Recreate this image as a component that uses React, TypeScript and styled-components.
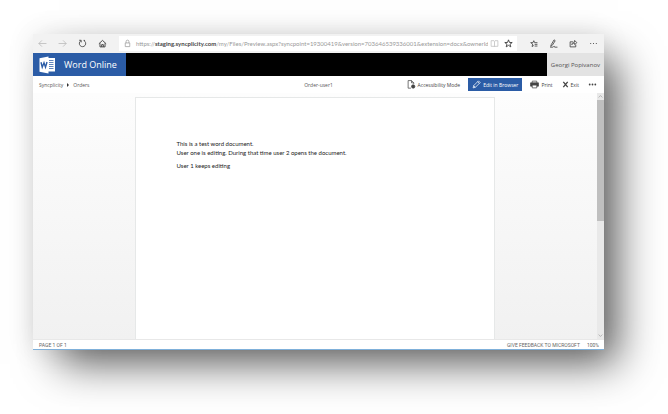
import React from "react";
import styled, { createGlobalStyle } from "styled-components";

const Global = createGlobalStyle`
  * { box-sizing: border-box; }
  body { margin: 0; background: #fff; }
  button, input { font: inherit; color: inherit; border: 0; padding: 0; margin: 0; background: none; }
  a { color: inherit; text-decoration: none; }
`;

const Page = styled.div`
  display: flex;
  min-height: 100vh;
  padding: 34px 64px 64px 33px;
  font-family: "Open Sans", "Noto Sans", sans-serif;
  font-size: 6px;
  line-height: 8px;
  color: #555;
  overflow: hidden;
`;

const Window = styled.div`
  flex: 1;
  min-width: 0;
  display: flex;
  flex-direction: column;
  background: #fff;
  border-bottom: 1px solid #7fb0da;
  box-shadow: 20px 20px 40px -6px rgba(0, 0, 0, 0.62), 0 0 26px rgba(0, 0, 0, 0.1);
`;

const BrowserBar = styled.header`
  display: flex;
  align-items: center;
  height: 19px;
  padding: 0 6px 0 5px;
  background: #f2f2f2;
`;

const IconRow = styled.nav`
  display: flex;
  gap: 11px;
`;

const IconButton = styled.button<{ $tone?: string }>`
  display: flex;
  flex: none;
  color: ${(p) => p.$tone ?? "#444"};
`;

const Address = styled.div`
  flex: 1;
  min-width: 0;
  display: flex;
  align-items: center;
  height: 15px;
  margin: 0 12px;
  padding: 0 4px;
  background: #fff;
  color: #999;
`;

const AddressText = styled.label`
  flex: 1;
  min-width: 0;
  display: flex;
  align-items: center;
  margin: 0 2px 0 4px;
  font-family: Lato, sans-serif;
  white-space: nowrap;
`;

const Host = styled.strong`
  color: #444;
  font-weight: 700;
`;

const PathInput = styled.input`
  flex: 1;
  min-width: 0;
  height: 10px;
  outline: none;
`;

const AddressActions = styled.div`
  display: flex;
  gap: 5px;
`;

const Banner = styled.div`
  display: flex;
  height: 23px;
  background: #000;
`;

const Brand = styled.a`
  display: flex;
  align-items: center;
  gap: 8px;
  padding: 0 9px 0 6px;
  background: #2b5ca6;
  color: #fff;
  font-size: 9px;
  line-height: 14px;
  white-space: nowrap;
`;

const Account = styled.button`
  margin-left: auto;
  padding: 0 4px;
  background: #e3e3e3;
  font-size: 6px;
  white-space: nowrap;
`;

const Toolbar = styled.div`
  display: grid;
  grid-template-columns: 1fr auto 1fr;
  align-items: center;
  height: 17px;
  padding: 0 6px;
  font-size: 5px;
  white-space: nowrap;
`;

const Crumbs = styled.nav`
  display: flex;
  align-items: center;
  gap: 4px;
`;

const Commands = styled.div`
  display: flex;
  align-items: center;
  justify-content: flex-end;
  gap: 7px;
`;

const Command = styled.button<{ $primary?: boolean }>`
  display: flex;
  align-items: center;
  gap: 2px;
  height: 13px;
  padding: ${(p) => (p.$primary ? "0 4px" : "0 1px")};
  background: ${(p) => (p.$primary ? "#2b5ca6" : "transparent")};
  color: ${(p) => (p.$primary ? "#fff" : "#444")};
`;

const Viewer = styled.main`
  flex: 1;
  display: flex;
  min-height: 0;
`;

const Canvas = styled.div`
  flex: 1;
  display: flex;
  justify-content: center;
  padding-top: 4px;
  background: linear-gradient(#fdfdfd, #f1f1f1);
`;

const Paper = styled.article`
  width: 64%;
  padding: 41px;
  background: #fff;
  border: 1px solid #e6e8e8;
  border-bottom: 0;
  font-family: Lato, sans-serif;
  font-size: 6px;
  line-height: 9px;
  color: #222;
`;

const Paragraph = styled.p`
  margin: 0 0 4px;
`;

const ScrollTrack = styled.div`
  display: flex;
  flex-direction: column;
  width: 7px;
  background: #e9e9e9;
  color: #999;
`;

const ScrollButton = styled.button`
  display: flex;
  justify-content: center;
  align-items: center;
  height: 7px;
`;

const ScrollSpace = styled.div`
  flex: 1;
`;

const ScrollThumb = styled.div`
  height: 52%;
  background: #bfbfbf;
`;

const StatusBar = styled.footer`
  display: flex;
  align-items: center;
  gap: 7px;
  height: 10px;
  padding: 0 5px 0 6px;
  border-top: 1px solid #e8e8e8;
  font-family: Roboto, sans-serif;
  font-size: 5px;
  color: #666;
`;

const Feedback = styled.a`
  margin-left: auto;
`;

type IconProps = {
  size?: number;
  weight?: number;
  children: React.ReactNode;
};

const Icon = ({ size = 9, weight = 1.3, children }: IconProps) => (
  <svg
    width={size}
    height={size}
    viewBox="0 0 16 16"
    fill="none"
    stroke="currentColor"
    strokeWidth={weight}
    aria-hidden="true"
  >
    {children}
  </svg>
);

const Dots = ({ r = 1 }: { r?: number }) => (
  <Icon>
    <g fill="currentColor" stroke="none">
      <circle cx="3" cy="8" r={r} />
      <circle cx="8" cy="8" r={r} />
      <circle cx="13" cy="8" r={r} />
    </g>
  </Icon>
);

const WordLogo = () => (
  <svg width="17" height="18" viewBox="0 0 34 36" aria-hidden="true">
    <path d="M18 4h14v27H18z" fill="#fff" />
    <path d="M20 9h9M20 13h9M20 17h9M20 21h9M20 25h9" stroke="#2b5ca6" strokeWidth="1.5" />
    <path d="M1 4.500 19 1v34L1 31.500z" fill="#fff" />
    <path
      d="m4 12.500 2.500 10L10 13.500l3 9 3-10.500"
      fill="none"
      stroke="#2b5ca6"
      strokeWidth="2.800"
    />
  </svg>
);

const star = "m8 1.500 1.700 4.600 4.900.2-3.900 3 1.400 4.700L8 11.300 3.900 14l1.400-4.700-3.900-3 4.900-.2z";

export default function App() {
  return (
    <>
      <Global />
      <Page>
        <Window>
          <BrowserBar>
            <IconRow aria-label="Navigation">
              <IconButton aria-label="Back" $tone="#b5b5b5">
                <Icon><path d="M15 8H1.500M7 2.500 1.500 8 7 13.500" /></Icon>
              </IconButton>
              <IconButton aria-label="Forward" $tone="#b5b5b5">
                <Icon><path d="M1 8h13.500M9 2.500 14.500 8 9 13.500" /></Icon>
              </IconButton>
              <IconButton aria-label="Refresh">
                <Icon weight={1.5}><path d="M10.500 2.800A5.700 5.700 0 1 1 5.200 3M2 2.300h3.700v3.700M10 2.500h2.500" /></Icon>
              </IconButton>
              <IconButton aria-label="Home">
                <Icon weight={1.7}><path d="M1.500 8.500 8 2.500l6.500 6M3.500 7.500v6.500h9V7.500M6.500 14v-4h3v4" /></Icon>
              </IconButton>
            </IconRow>
            <Address>
              <Icon><path d="M4 7h8v6.500H4zM5.500 7V4.500a2.500 2.500 0 0 1 5 0V7" /></Icon>
              <AddressText>
                https://<Host>staging.syncplicity.com</Host>
                <PathInput
                  aria-label="Address"
                  defaultValue="/my/Files/Preview.aspx?syncpoint=19300419&version=703646539336001&extension=docx&ownerId=8b569"
                />
              </AddressText>
              <AddressActions>
                <IconButton aria-label="Reading view" $tone="#bbb">
                  <Icon><path d="M2 3h5l1 1 1-1h5v10H9l-1 1-1-1H2zM8 4v10" /></Icon>
                </IconButton>
                <IconButton aria-label="Add to favorites">
                  <Icon weight={1.7}><path d={star} /></Icon>
                </IconButton>
              </AddressActions>
            </Address>
            <IconRow aria-label="Browser tools">
              <IconButton aria-label="Favorites hub">
                <Icon weight={1.5}>
                  <path d="m8.500 11.500-3 2 1-4.500L3 6.500h4L8.500 3 10 6.500h5M10 9.500h5M10 12.500h5" />
                </Icon>
              </IconButton>
              <IconButton aria-label="Make a web note">
                <Icon weight={1.5}><path d="m4 10 5-8.500 2 1.500-5 8-3 2zM2 14.500h5c2-2 3-2 3 0h5" /></Icon>
              </IconButton>
              <IconButton aria-label="Share">
                <Icon weight={1.5}><path d="M7 5H2v9h10v-4M5 10c.5-3 2.500-4.500 5-4.500V2.500l4 4-4 3.500V7.500C8 7.500 6.500 8 5 10z" /></Icon>
              </IconButton>
              <IconButton aria-label="More">
                <Dots />
              </IconButton>
            </IconRow>
          </BrowserBar>

          <Banner>
            <Brand href="#">
              <WordLogo />
              Word Online
            </Brand>
            <Account>Georgi Popivanov</Account>
          </Banner>

          <Toolbar>
            <Crumbs aria-label="Breadcrumb">
              <a href="#">Syncplicity</a>
              <svg width="2" height="4" viewBox="0 0 2 4" aria-hidden="true">
                <path d="M0 0l2 2-2 2z" fill="#333" />
              </svg>
              <a href="#">Orders</a>
            </Crumbs>
            <span>Order-user1</span>
            <Commands>
              <Command>
                <Icon>
                  <path d="M7 14.500H2V1h6l4 4v2M8 1v4h4" />
                  <circle cx="11" cy="11.500" r="3" fill="currentColor" />
                </Icon>
                Accessibility Mode
              </Command>
              <Command $primary>
                <Icon><path d="m2 14 1-4L11.500 1.500l3 3L6 13zM3 10l3 3M10 3l3 3" /></Icon>
                Edit in Browser
              </Command>
              <Command>
                <Icon>
                  <path d="M4 5V2h8v3" />
                  <path d="M1 5h14v6H1z" fill="currentColor" />
                  <path d="M4 9h8v5H4z" fill="#fff" />
                </Icon>
                Print
              </Command>
              <Command>
                <Icon size={7} weight={3}><path d="m3 2 10 12M13 2 3 14" /></Icon>
                Exit
              </Command>
              <Command aria-label="More commands">
                <Dots r={1.6} />
              </Command>
            </Commands>
          </Toolbar>

          <Viewer>
            <Canvas>
              <Paper>
                <Paragraph>
                  This is a test word document.
                  <br />
                  User one is editing. During that time user 2 opens the document.
                </Paragraph>
                <Paragraph>User 1 keeps editing</Paragraph>
              </Paper>
            </Canvas>
            <ScrollTrack>
              <ScrollButton aria-label="Scroll up">
                <Icon size={5} weight={2}><path d="m2 11 6-6 6 6" /></Icon>
              </ScrollButton>
              <ScrollSpace>
                <ScrollThumb />
              </ScrollSpace>
              <ScrollButton aria-label="Scroll down">
                <Icon size={5} weight={2}><path d="m2 5 6 6 6-6" /></Icon>
              </ScrollButton>
            </ScrollTrack>
          </Viewer>

          <StatusBar>
            <span>PAGE 1 OF 1</span>
            <Feedback href="#">GIVE FEEDBACK TO MICROSOFT</Feedback>
            <span>100%</span>
          </StatusBar>
        </Window>
      </Page>
    </>
  );
}
